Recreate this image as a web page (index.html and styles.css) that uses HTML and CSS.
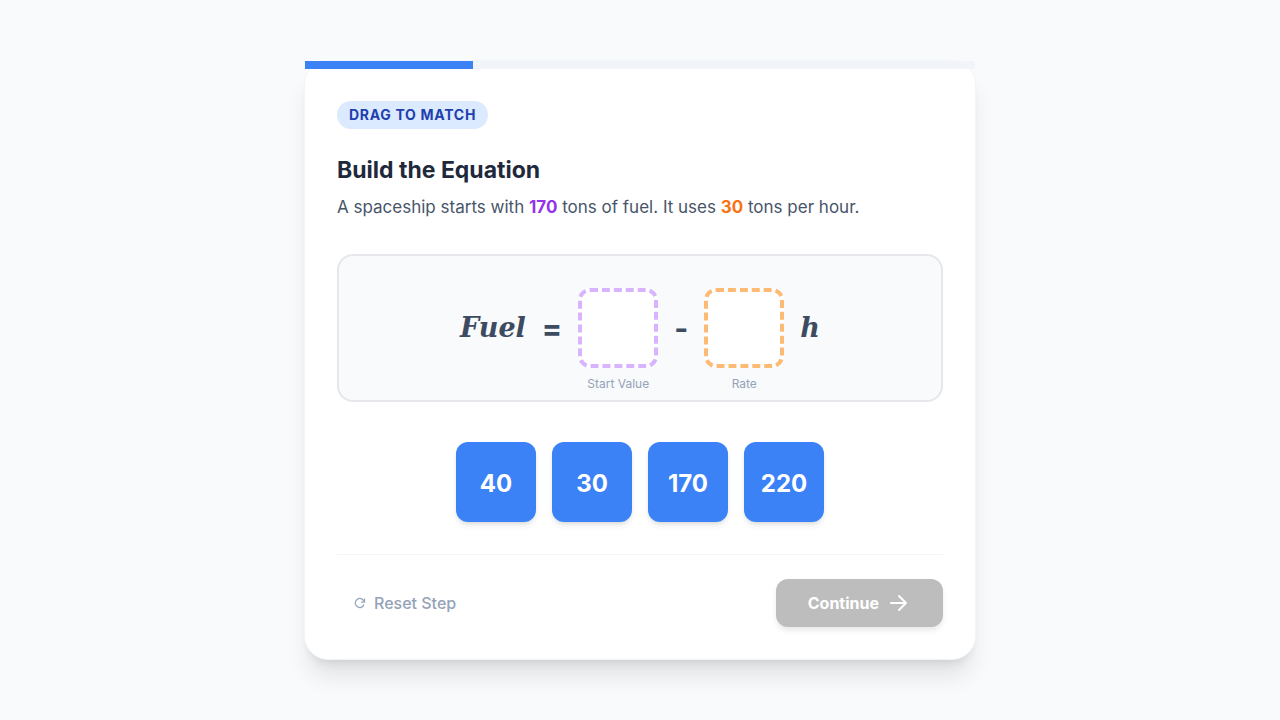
FILE: index.html
```
<!DOCTYPE html>
<html lang="en">
<head>
  <meta charset="UTF-8">
  <meta name="viewport" content="width=device-width, initial-scale=1.0">
  <title>Build the Equation</title>
  <link rel="stylesheet" href="styles.css">
</head>
<body>
  <main class="card">
    <div class="progress">
      <div class="progress-fill" style="width: 25%;"></div>
    </div>

    <div class="content">
      <span class="badge">DRAG TO MATCH</span>
      <h1>Build the Equation</h1>
      <p class="prompt">A spaceship starts with <strong class="start">170</strong> tons of fuel. It uses <strong class="rate">30</strong> tons per hour.</p>

      <div class="equation">
        <span class="math">Fuel</span>
        <span>=</span>
        <div class="slot slot-start">
          <span class="slot-label">Start Value</span>
        </div>
        <span>-</span>
        <div class="slot slot-rate">
          <span class="slot-label">Rate</span>
        </div>
        <span class="math">h</span>
      </div>

      <div class="tiles">
        <button class="tile" draggable="true">40</button>
        <button class="tile" draggable="true">30</button>
        <button class="tile" draggable="true">170</button>
        <button class="tile" draggable="true">220</button>
      </div>

      <div class="footer">
        <button class="reset-button">
          <svg width="12" height="12" viewBox="0 0 24 24" fill="none" stroke="currentColor" stroke-width="2.500">
            <path d="M21 3v7h-7"/>
            <path d="M20 9a9 9 0 1 0 0 6"/>
          </svg>
          Reset Step
        </button>
        <button class="continue-button" disabled>
          Continue
          <svg width="24" height="24" viewBox="0 0 24 24" fill="none" stroke="currentColor" stroke-width="2" stroke-linecap="round" stroke-linejoin="round">
            <path d="M4 12h15M12 5l7 7-7 7"/>
          </svg>
        </button>
      </div>
    </div>
  </main>
</body>
</html>
```
FILE: styles.css
```
* {
  box-sizing: border-box;
}
body {
  margin: 0;
  min-height: 100vh;
  padding: 16px;
  display: flex;
  align-items: center;
  justify-content: center;
  background-color: #f8fafc;
  color: #1e293b;
  font-family: Inter, "Liberation Sans", sans-serif;
}
button {
  border: none;
  font-family: inherit;
  cursor: pointer;
}
.card {
  width: 100%;
  max-width: 672px;
  background-color: #fff;
  border: 1px solid #f1f5f9;
  border-radius: 24px;
  box-shadow: 0 20px 25px -5px rgba(0, 0, 0, 0.1), 0 8px 10px -6px rgba(0, 0, 0, 0.1);
}
.progress {
  height: 8px;
  background-color: #f1f5f9;
}
.progress-fill {
  height: 100%;
  background-color: #3b82f6;
}
.content {
  padding: 32px;
}
.badge {
  display: block;
  width: fit-content;
  padding: 4px 12px;
  border-radius: 14px;
  background-color: #dbeafe;
  color: #1e40af;
  font-size: 14px;
  font-weight: 700;
  line-height: 20px;
  letter-spacing: 0.05em;
}
h1 {
  margin: 24px 0 6px;
  font-size: 23px;
  font-weight: 700;
  line-height: 34px;
}
.prompt {
  margin: 0 0 33px;
  color: #475569;
  font-size: 17px;
  line-height: 28px;
}
.prompt strong {
  font-weight: 700;
}
.prompt .start {
  color: #9333ea;
}
.prompt .rate {
  color: #f97316;
}
.equation {
  display: flex;
  align-items: center;
  justify-content: center;
  gap: 16px;
  padding: 32px;
  background-color: #f8fafc;
  border: 2px solid #e5e7eb;
  border-radius: 16px;
  color: #3d4b60;
  font-size: 30px;
  font-weight: 700;
  line-height: 36px;
}
.math {
  font-family: "DejaVu Serif", serif;
  font-size: 27px;
  font-style: italic;
}
.slot {
  position: relative;
  width: 80px;
  height: 80px;
  background-color: #fff;
  border: 4px dashed;
  border-radius: 12px;
}
.slot-start {
  border-color: #d8b4fe;
}
.slot-rate {
  border-color: #fdba74;
}
/* caption hangs under the drop slot */
.slot-label {
  position: absolute;
  left: 0;
  right: 0;
  bottom: -28px;
  color: #94a3b8;
  font-size: 12px;
  font-weight: 400;
  line-height: 16px;
  text-align: center;
}
.tiles {
  display: flex;
  flex-wrap: wrap;
  justify-content: center;
  gap: 16px;
  margin: 40px 0 32px;
}
.tile {
  width: 80px;
  height: 80px;
  padding: 2px 0 0;
  border-radius: 12px;
  background-color: #3b82f6;
  box-shadow: 0 4px 6px -1px rgba(0, 0, 0, 0.1), 0 2px 4px -2px rgba(0, 0, 0, 0.1);
  color: #fff;
  font-size: 24px;
  font-weight: 700;
}
.footer {
  display: flex;
  align-items: center;
  justify-content: space-between;
  padding-top: 24px;
  border-top: 1px solid #f1f5f9;
}
.reset-button,
.continue-button {
  display: flex;
  align-items: center;
  gap: 8px;
  font-size: 16px;
  line-height: 24px;
}
.reset-button {
  padding: 8px 17px;
  background: none;
  color: #94a3b8;
  font-weight: 500;
}
.continue-button {
  padding: 12px 32px;
  border-radius: 12px;
  background-color: #bdbdbd;
  box-shadow: 0 4px 6px -1px rgba(0, 0, 0, 0.1);
  color: #fff;
  font-weight: 700;
  cursor: not-allowed;
}
```
